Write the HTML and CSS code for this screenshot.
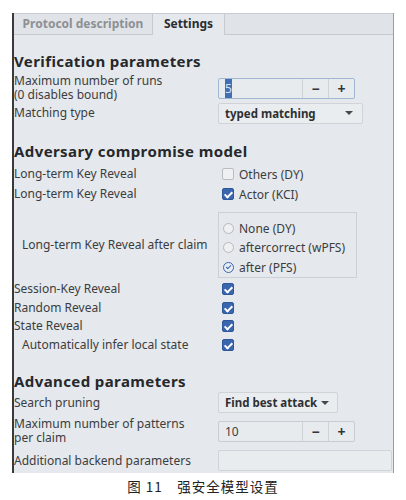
FILE: index.html
```html
<!DOCTYPE html>
<html lang="en">
<head>
    <meta charset="UTF-8">
    <meta name="viewport" content="width=device-width, initial-scale=1.0">
    <title>Settings</title>
    <link rel="stylesheet" href="styles.css">
</head>
<body>
    <div class="frame">
        <div class="tabs">
            <div class="tab">Protocol description</div>
            <div class="tab active">Settings</div>
            <div class="tab-rest"></div>
        </div>
        <div class="content">
            <h2 class="section first">Verification parameters</h2>
            <div class="row r-runs">
                <div class="label">Maximum number of runs<br>(0 disables bound)</div>
                <div class="spin focus">
                    <span class="spin-value"><span class="sel">5</span></span>
                    <span class="spin-btn">&minus;</span>
                    <span class="spin-btn">+</span>
                </div>
            </div>
            <div class="row r-match">
                <div class="label">Matching type</div>
                <div class="combo wide">typed matching <span class="arrow"></span></div>
            </div>

            <h2 class="section">Adversary compromise model</h2>
            <div class="row r-check">
                <div class="label">Long-term Key Reveal</div>
                <label class="check"><span class="box"></span>Others (DY)</label>
            </div>
            <div class="row r-check">
                <div class="label">Long-term Key Reveal</div>
                <label class="check"><span class="box on"></span>Actor (KCI)</label>
            </div>
            <div class="row r-radio">
                <div class="label indent">Long-term Key Reveal after claim</div>
                <div class="radio-group">
                    <label class="radio"><span class="dot"></span>None (DY)</label>
                    <label class="radio"><span class="dot"></span>aftercorrect (wPFS)</label>
                    <label class="radio"><span class="dot on"></span>after (PFS)</label>
                </div>
            </div>
            <div class="row r-small">
                <div class="label">Session-Key Reveal</div>
                <label class="check"><span class="box on"></span></label>
            </div>
            <div class="row r-small">
                <div class="label">Random Reveal</div>
                <label class="check"><span class="box on"></span></label>
            </div>
            <div class="row r-small">
                <div class="label">State Reveal</div>
                <label class="check"><span class="box on"></span></label>
            </div>
            <div class="row r-small">
                <div class="label indent">Automatically infer local state</div>
                <label class="check"><span class="box on"></span></label>
            </div>

            <h2 class="section">Advanced parameters</h2>
            <div class="row r-prune">
                <div class="label">Search pruning</div>
                <div class="combo short">Find best attack <span class="arrow"></span></div>
            </div>
            <div class="row r-pattern">
                <div class="label">Maximum number of patterns<br>per claim</div>
                <div class="spin">
                    <span class="spin-value">10</span>
                    <span class="spin-btn">&minus;</span>
                    <span class="spin-btn">+</span>
                </div>
            </div>
            <div class="row r-extra">
                <div class="label">Additional backend parameters</div>
                <div class="text-input"></div>
            </div>
        </div>
    </div>
    <p class="caption">图 11　强安全模型设置</p>
</body>
</html>
```

FILE: styles.css
```css
body {
    margin: 0;
    background: #ffffff;
    font-family: "Noto Sans", sans-serif;
    color: #3b3d40;
}
.frame {
    margin: 13px 0 0 12px;
    width: 382px;
    height: 460px;
    box-sizing: border-box;
    background: #e5e8ec;
    border-left: 2px solid #3a3a3a;
    border-right: 1px solid #9a9ca0;
    display: flex;
    flex-direction: column;
    overflow: hidden;
}
.tabs {
    display: flex;
    flex: none;
    height: 22px;
    border-top: 1px solid #c9ccd0;
    box-sizing: border-box;
}
.tab {
    flex: none;
    box-sizing: border-box;
    width: 139px;
    font-size: 12px;
    font-weight: bold;
    color: #8d9094;
    background: #e0e3e7;
    line-height: 20px;
    white-space: nowrap;
    border-bottom: 1px solid #c6c9cd;
    border-right: 1px solid #c6c9cd;
    text-align: center;
}
.tab.active {
    width: 72px;
    color: #2b2d30;
    background: #e5e8ec;
    border-bottom: none;
}
.tab-rest {
    flex: 1;
    background: #e0e3e7;
    border-bottom: 1px solid #c6c9cd;
}
.section {
    margin: 18px 0 0 0;
    height: 18px;
    line-height: 18px;
    font-size: 15px;
    font-weight: bold;
    color: #26282b;
    letter-spacing: 0.4px;
}
.section.first {
    margin-top: 17px;
}
.row {
    display: grid;
    grid-template-columns: 204px 1fr;
    align-items: center;
    font-size: 12px;
}
.label {
    line-height: 14px;
    white-space: nowrap;
}
.label.indent {
    padding-left: 8px;
}
.r-runs { margin-top: 4px; height: 22px; }
.r-match { margin-top: 6px; height: 22px; }
.r-check { height: 20px; }
.section + .r-check { margin-top: 4px; }
.r-radio { margin-top: 8px; height: 66px; }
.r-small { height: 18.5px; }
.r-radio + .r-small { margin-top: 2px; }
.r-prune { margin-top: 2px; height: 21px; }
.r-pattern { margin-top: 4px; height: 23px; }
.r-extra { margin-top: 10px; height: 21px; }

.spin {
    display: flex;
    width: 137px;
    height: 21px;
    box-sizing: border-box;
    border: 1px solid #c9ccd1;
    border-radius: 2px;
    background: #e8ebee;
}
.spin.focus {
    border-color: #9fb7d3;
}
.spin-value {
    flex: 1;
    padding-left: 6px;
    line-height: 19px;
    font-size: 12px;
    color: #3b3d40;
}
.sel {
    background: #3f6fb5;
    color: #d8e3f2;
    padding: 1px 0;
}
.spin-btn {
    width: 25px;
    text-align: center;
    line-height: 19px;
    font-size: 14px;
    font-weight: bold;
    color: #33353a;
    border-left: 1px solid #cfd2d6;
}
.combo {
    height: 21px;
    box-sizing: border-box;
    border: 1px solid #d0d3d7;
    border-radius: 2px;
    background: #eaedf0;
    padding-left: 6px;
    font-weight: bold;
    font-size: 11.5px;
    line-height: 19px;
    color: #2e3033;
    display: flex;
    align-items: center;
}
.combo.wide {
    width: 145px;
    justify-content: space-between;
    padding-right: 9px;
}
.combo.short {
    width: 120px;
    gap: 4px;
}
.arrow {
    width: 0;
    height: 0;
    border-left: 4px solid transparent;
    border-right: 4px solid transparent;
    border-top: 4px solid #45484c;
}
.check, .radio {
    display: flex;
    align-items: center;
    gap: 5px;
    padding-left: 4px;
    font-size: 12px;
    color: #3b3d40;
}
.box {
    width: 12px;
    height: 12px;
    box-sizing: border-box;
    border: 1px solid #b9bcc1;
    border-radius: 2px;
    background: #eef0f2;
    position: relative;
}
.box.on {
    background: #3a66b0;
    border-color: #2f5899;
}
.box.on::after {
    content: "";
    position: absolute;
    left: 3px;
    top: 1px;
    width: 3px;
    height: 6px;
    border-right: 2px solid #ffffff;
    border-bottom: 2px solid #ffffff;
    transform: rotate(45deg);
}
.radio-group {
    width: 139px;
    height: 66px;
    box-sizing: border-box;
    border: 1px solid #cdd0d4;
    display: flex;
    flex-direction: column;
    justify-content: flex-end;
}
.radio {
    height: 19.5px;
}
.dot {
    width: 11px;
    height: 11px;
    box-sizing: border-box;
    border: 1px solid #b6b9be;
    border-radius: 50%;
    background: #eef0f2;
    position: relative;
}
.dot.on {
    border: 1.5px solid #3a66b0;
    background: #e9edf3;
}
.dot.on::after {
    content: "";
    position: absolute;
    left: 2.5px;
    top: 1px;
    width: 2px;
    height: 4px;
    border-right: 1.5px solid #3a66b0;
    border-bottom: 1.5px solid #3a66b0;
    transform: rotate(45deg);
}
.text-input {
    width: 174px;
    height: 21px;
    box-sizing: border-box;
    border: 1px solid #d0d3d7;
    border-radius: 2px;
    background: #e9ecef;
}
.caption {
    margin: 3px 0 0 0;
    text-align: center;
    font-family: "Noto Sans CJK SC", sans-serif;
    font-size: 13.5px;
    color: #222222;
    letter-spacing: 1px;
}
```
